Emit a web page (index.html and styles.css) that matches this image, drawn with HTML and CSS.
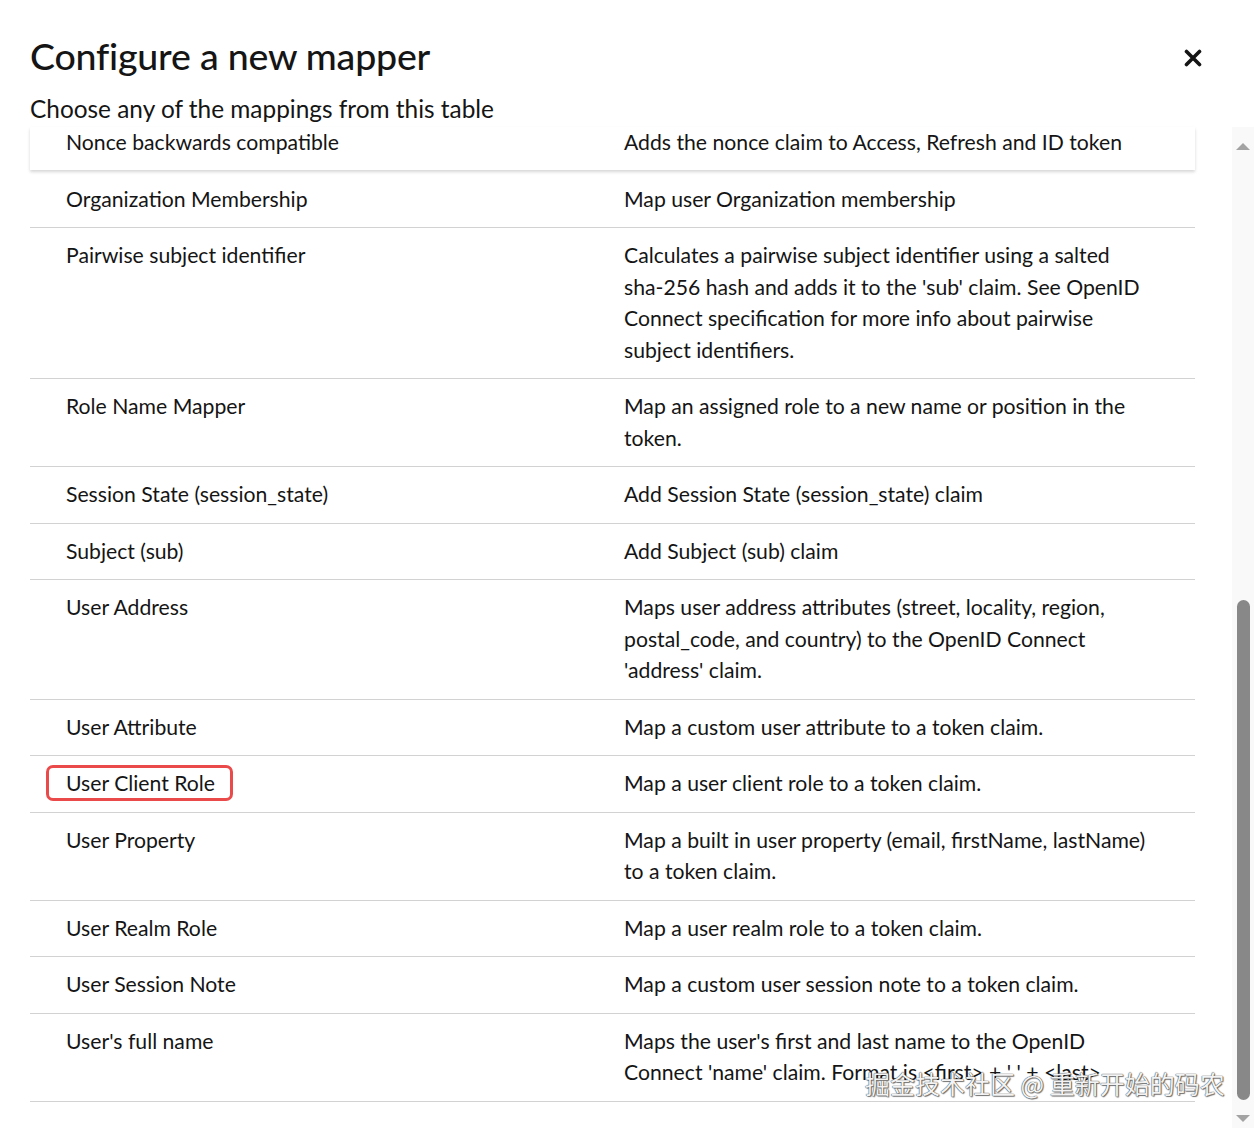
FILE: index.html
```html
<!DOCTYPE html>
<html lang="en">
<head>
<meta charset="utf-8">
<title>Configure a new mapper</title>
<link rel="stylesheet" href="styles.css">
</head>
<body>
<div class="modal">
  <header class="modal-header">
    <div class="heading">
      <h1 class="title">Configure a new mapper</h1>
      <p class="subtitle">Choose any of the mappings from this table</p>
    </div>
    <button class="close" aria-label="Close">
      <svg width="18" height="18" viewBox="0 0 18 18"><path d="M2.5 2.5 L15.5 15.5 M15.5 2.5 L2.5 15.5" stroke="#151515" stroke-width="3.6" stroke-linecap="round"/></svg>
    </button>
  </header>
  <div class="modal-body">
    <div class="table">
      <div class="row row-first"><div class="cell name">Nonce backwards compatible</div><div class="cell desc">Adds the nonce claim to Access, Refresh and ID token</div></div>
      <div class="row"><div class="cell name">Organization Membership</div><div class="cell desc">Map user Organization membership</div></div>
      <div class="row"><div class="cell name">Pairwise subject identifier</div><div class="cell desc">Calculates a pairwise subject identifier using a salted sha-&#8288;256 hash and adds it to the 'sub' claim. See OpenID Connect specification for more info about pairwise subject identifiers.</div></div>
      <div class="row"><div class="cell name">Role Name Mapper</div><div class="cell desc">Map an assigned role to a new name or position in the token.</div></div>
      <div class="row"><div class="cell name">Session State (session_state)</div><div class="cell desc">Add Session State (session_state) claim</div></div>
      <div class="row"><div class="cell name">Subject (sub)</div><div class="cell desc">Add Subject (sub) claim</div></div>
      <div class="row"><div class="cell name">User Address</div><div class="cell desc">Maps user address attributes (street, locality, region, postal_code, and country) to the OpenID Connect 'address' claim.</div></div>
      <div class="row"><div class="cell name">User Attribute</div><div class="cell desc">Map a custom user attribute to a token claim.</div></div>
      <div class="row"><div class="cell name"><span class="highlight">User Client Role</span></div><div class="cell desc">Map a user client role to a token claim.</div></div>
      <div class="row"><div class="cell name">User Property</div><div class="cell desc">Map a built in user property (email, firstName, lastName) to a token claim.</div></div>
      <div class="row"><div class="cell name">User Realm Role</div><div class="cell desc">Map a user realm role to a token claim.</div></div>
      <div class="row"><div class="cell name">User Session Note</div><div class="cell desc">Map a custom user session note to a token claim.</div></div>
      <div class="row"><div class="cell name">User's full name</div><div class="cell desc">Maps the user's first and last name to the OpenID Connect 'name' claim. Format is &lt;first&gt; + ' ' + &lt;last&gt;</div></div>
    </div>
    <div class="scrollbar">
      <div class="arrow arrow-up"></div>
      <div class="track"><div class="thumb"></div></div>
      <div class="arrow arrow-down"></div>
    </div>
  </div>
  <div class="watermark">掘金技术社区 @ 重新开始的码农</div>
</div>
</body>
</html>
```
FILE: styles.css
```css
* { box-sizing: border-box; }
html, body { margin: 0; padding: 0; background: #fff; }
body {
  font-family: "Lato", "Liberation Sans", sans-serif;
  color: #151515;
  width: 1254px;
  height: 1128px;
  overflow: hidden;
}
.modal {
  position: relative;
  width: 1254px;
  height: 1128px;
  display: flex;
  flex-direction: column;
}
.modal-header {
  height: 127px;
  padding: 34px 0 0 30px;
  display: flex;
  justify-content: space-between;
  align-items: flex-start;
}
.title {
  margin: 0;
  font-size: 37.5px;
  line-height: 44px;
  font-weight: 500;
  letter-spacing: -0.2px;
}
.subtitle {
  margin: 14px 0 0;
  font-size: 24.4px;
  line-height: 33px;
}
.close {
  margin: 15px 52px 0 0;
  padding: 0;
  border: 0;
  background: none;
  width: 18px;
  height: 18px;
  display: flex;
}
.modal-body {
  flex: 1;
  display: flex;
  min-height: 0;
}
.table {
  margin-left: 30px;
  width: 1165px;
}
.row {
  display: grid;
  grid-template-columns: 594px 1fr;
  border-bottom: 1px solid #d2d2d2;
  background: #fff;
}
.row-first {
  border-bottom: 0;
  box-shadow: 0 2px 3px rgba(0,0,0,0.16);
  position: relative;
}
.row-first .cell { padding-top: 0; padding-bottom: 11px; }
.row-first + .row .cell { padding-top: 14px; }
.cell {
  font-size: 21.2px;
  line-height: 31.5px;
  padding: 12px 0;
}
.name { padding-left: 36px; }
.desc { padding-right: 36px; }
.highlight {
  position: relative;
}
.highlight::after {
  content: "";
  position: absolute;
  left: -20px;
  right: -18px;
  top: -5px;
  bottom: -5px;
  border: 3px solid #ea4a4a;
  border-radius: 7px;
}
.scrollbar {
  margin-left: 37px;
  width: 22px;
  background: #f9f9f9;
  display: flex;
  flex-direction: column;
  align-items: center;
  padding: 16px 0 6px;
}
.arrow {
  width: 0;
  height: 0;
  border-left: 7px solid transparent;
  border-right: 7px solid transparent;
}
.arrow-up { border-bottom: 7px solid #a3a3a3; }
.arrow-down { border-top: 7px solid #a3a3a3; }
.track {
  flex: 1;
  width: 100%;
  display: flex;
  justify-content: center;
}
.thumb {
  margin-top: 450px;
  width: 13px;
  height: 500px;
  border-radius: 7px;
  background: #888;
}
.watermark {
  position: absolute;
  left: 865px;
  top: 1065px;
  font-family: "Noto Sans CJK SC", sans-serif;
  font-size: 25px;
  line-height: 36px;
  color: rgba(255,255,255,0.95);
  text-shadow: 0 0 1px #444, 0 0 1px #444, 1px 1px 1px rgba(0,0,0,0.5);
  white-space: nowrap;
}
```
